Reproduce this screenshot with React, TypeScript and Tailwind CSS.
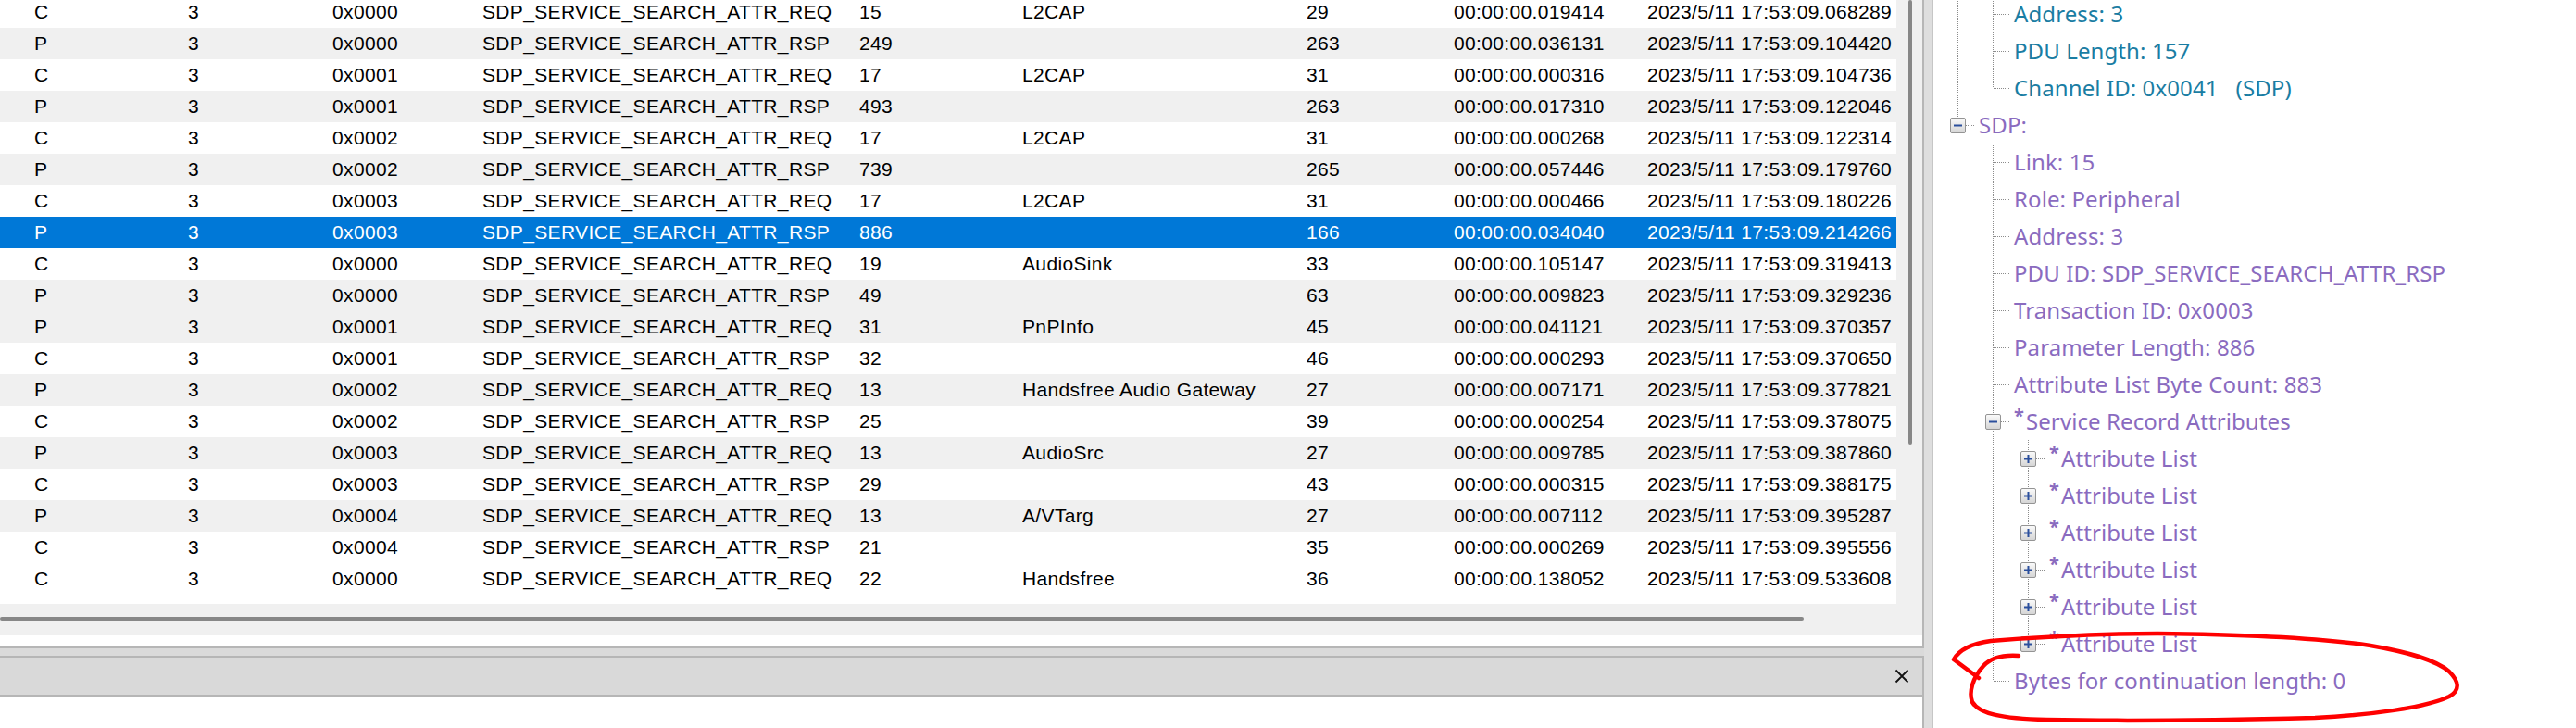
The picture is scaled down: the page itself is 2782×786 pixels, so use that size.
import React from 'react'

type Row = [string, string, string, string, string, string, string, string, string]

const rows: Row[] = [
  ['C', '3', '0x0000', 'SDP_SERVICE_SEARCH_ATTR_REQ', '15', 'L2CAP', '29', '00:00:00.019414', '2023/5/11 17:53:09.068289'],
  ['P', '3', '0x0000', 'SDP_SERVICE_SEARCH_ATTR_RSP', '249', '', '263', '00:00:00.036131', '2023/5/11 17:53:09.104420'],
  ['C', '3', '0x0001', 'SDP_SERVICE_SEARCH_ATTR_REQ', '17', 'L2CAP', '31', '00:00:00.000316', '2023/5/11 17:53:09.104736'],
  ['P', '3', '0x0001', 'SDP_SERVICE_SEARCH_ATTR_RSP', '493', '', '263', '00:00:00.017310', '2023/5/11 17:53:09.122046'],
  ['C', '3', '0x0002', 'SDP_SERVICE_SEARCH_ATTR_REQ', '17', 'L2CAP', '31', '00:00:00.000268', '2023/5/11 17:53:09.122314'],
  ['P', '3', '0x0002', 'SDP_SERVICE_SEARCH_ATTR_RSP', '739', '', '265', '00:00:00.057446', '2023/5/11 17:53:09.179760'],
  ['C', '3', '0x0003', 'SDP_SERVICE_SEARCH_ATTR_REQ', '17', 'L2CAP', '31', '00:00:00.000466', '2023/5/11 17:53:09.180226'],
  ['P', '3', '0x0003', 'SDP_SERVICE_SEARCH_ATTR_RSP', '886', '', '166', '00:00:00.034040', '2023/5/11 17:53:09.214266'],
  ['C', '3', '0x0000', 'SDP_SERVICE_SEARCH_ATTR_REQ', '19', 'AudioSink', '33', '00:00:00.105147', '2023/5/11 17:53:09.319413'],
  ['P', '3', '0x0000', 'SDP_SERVICE_SEARCH_ATTR_RSP', '49', '', '63', '00:00:00.009823', '2023/5/11 17:53:09.329236'],
  ['P', '3', '0x0001', 'SDP_SERVICE_SEARCH_ATTR_REQ', '31', 'PnPInfo', '45', '00:00:00.041121', '2023/5/11 17:53:09.370357'],
  ['C', '3', '0x0001', 'SDP_SERVICE_SEARCH_ATTR_RSP', '32', '', '46', '00:00:00.000293', '2023/5/11 17:53:09.370650'],
  ['P', '3', '0x0002', 'SDP_SERVICE_SEARCH_ATTR_REQ', '13', 'Handsfree Audio Gateway', '27', '00:00:00.007171', '2023/5/11 17:53:09.377821'],
  ['C', '3', '0x0002', 'SDP_SERVICE_SEARCH_ATTR_RSP', '25', '', '39', '00:00:00.000254', '2023/5/11 17:53:09.378075'],
  ['P', '3', '0x0003', 'SDP_SERVICE_SEARCH_ATTR_REQ', '13', 'AudioSrc', '27', '00:00:00.009785', '2023/5/11 17:53:09.387860'],
  ['C', '3', '0x0003', 'SDP_SERVICE_SEARCH_ATTR_RSP', '29', '', '43', '00:00:00.000315', '2023/5/11 17:53:09.388175'],
  ['P', '3', '0x0004', 'SDP_SERVICE_SEARCH_ATTR_REQ', '13', 'A/VTarg', '27', '00:00:00.007112', '2023/5/11 17:53:09.395287'],
  ['C', '3', '0x0004', 'SDP_SERVICE_SEARCH_ATTR_RSP', '21', '', '35', '00:00:00.000269', '2023/5/11 17:53:09.395556'],
  ['C', '3', '0x0000', 'SDP_SERVICE_SEARCH_ATTR_REQ', '22', 'Handsfree', '36', '00:00:00.138052', '2023/5/11 17:53:09.533608'],
]

const SELECTED = 7

// column widths, measured from the left edge of each text
const colClass = [
  'w-[203px] pl-[37px]',
  'w-[156px]',
  'w-[162px]',
  'w-[407px]',
  'w-[176px]',
  'w-[307px]',
  'w-[159px]',
  'w-[209px]',
  'w-[320px]',
]

type TreeItem = {
  level: number
  guides: boolean[]
  last: boolean
  text: string
  tone: 'teal' | 'purple'
  box?: '+' | '-'
  star?: boolean
}

const l2 = (text: string, last = false): TreeItem => ({ level: 1, guides: [true], last, text, tone: 'teal' })
const sdp = (text: string, last = false): TreeItem => ({ level: 1, guides: [false], last, text, tone: 'purple' })
const attr = (last = false): TreeItem => ({
  level: 2,
  guides: [false, true],
  last,
  text: 'Attribute List',
  tone: 'purple',
  box: '+',
  star: true,
})

const tree: TreeItem[] = [
  l2('Address: 3'),
  l2('PDU Length: 157'),
  l2('Channel ID: 0x0041   (SDP)', true),
  { level: 0, guides: [], last: true, text: 'SDP:', tone: 'purple', box: '-' },
  sdp('Link: 15'),
  sdp('Role: Peripheral'),
  sdp('Address: 3'),
  sdp('PDU ID: SDP_SERVICE_SEARCH_ATTR_RSP'),
  sdp('Transaction ID: 0x0003'),
  sdp('Parameter Length: 886'),
  sdp('Attribute List Byte Count: 883'),
  { level: 1, guides: [false], last: false, text: 'Service Record Attributes', tone: 'purple', box: '-', star: true },
  attr(),
  attr(),
  attr(),
  attr(),
  attr(),
  attr(true),
  sdp('Bytes for continuation length: 0', true),
]

const DOT = '#8c8c8c'

// the first visible tree row is scrolled 5px under the top edge
function guideTop(first: boolean) {
  return first ? 5 : 0
}

function GuideCell({ on, h, first }: { on: boolean; h: number; first: boolean }) {
  const o = guideTop(first)
  return (
    <svg width="38" height={h} viewBox={`0 ${o} 38 ${h}`} className="shrink-0">
      {on && <line x1="19.5" y1="0" x2="19.5" y2="40" stroke={DOT} strokeDasharray="1 1" />}
    </svg>
  )
}

function NodeCell({ last, box, h, first }: { last: boolean; box?: '+' | '-'; h: number; first: boolean }) {
  const o = guideTop(first)
  return (
    <svg width="38" height={h} viewBox={`0 ${o} 38 ${h}`} className="shrink-0">
      <defs>
        <linearGradient id="tvbox" x1="0" y1="0" x2="0" y2="1">
          <stop offset="0" stopColor="#fbfbfb" />
          <stop offset="1" stopColor="#d4d4d4" />
        </linearGradient>
      </defs>
      <line x1="19.5" y1="0" x2="19.5" y2={last ? 20 : 40} stroke={DOT} strokeDasharray="1 1" />
      <line x1="20" y1="20.5" x2="37" y2="20.5" stroke={DOT} strokeDasharray="1 1" />
      {box && (
        <g>
          <rect x="11.5" y="12.5" width="16" height="16" rx="1.5" fill="url(#tvbox)" stroke="#949494" />
          <line x1="15" y1="20.5" x2="24" y2="20.5" stroke="#2b4f9c" strokeWidth="2" />
          {box === '+' && <line x1="19.5" y1="16" x2="19.5" y2="25" stroke="#2b4f9c" strokeWidth="2" />}
        </g>
      )}
    </svg>
  )
}

function TreeRow({ item, first }: { item: TreeItem; first: boolean }) {
  const color = item.tone === 'teal' ? 'text-[#1a7da3]' : 'text-[#8a6bbf]'
  const h = first ? 35 : 40
  return (
    <div className={`flex items-start pl-[7px] ${first ? 'h-[35px]' : 'h-[40px]'}`}>
      {item.guides.map((g, i) => (
        <GuideCell key={i} on={g} h={h} first={first} />
      ))}
      <NodeCell last={item.last} box={item.box} h={h} first={first} />
      <div
        className={`ml-[4px] flex items-center whitespace-pre ${color} ${first ? 'h-[30px]' : 'h-[40px]'}`}
      >
        {item.star && <span className="mr-[2px] -mt-[12px] text-[20px] font-bold leading-none">*</span>}
        <span>{item.text}</span>
      </div>
    </div>
  )
}

function ListRow({ row, index }: { row: Row; index: number }) {
  const selected = index === SELECTED
  const bg = selected ? 'bg-[#0078d7] text-white' : row[0] === 'P' ? 'bg-[#f0f0f0] text-black' : 'bg-white text-black'
  const first = index === 0
  return (
    <div className={`flex whitespace-nowrap ${bg} ${first ? 'h-[30px]' : 'h-[34px]'}`}>
      {row.map((cell, i) => (
        <div
          key={i}
          className={`shrink-0 overflow-hidden ${first ? 'h-[30px] leading-[26px]' : 'h-[34px] leading-[34px]'} ${colClass[i]}`}
        >
          {cell}
        </div>
      ))}
    </div>
  )
}

export default function App() {
  return (
    <div className="relative flex h-[786px] w-[2782px] overflow-hidden bg-[#dadada]">
      <div className="flex w-[2078px] shrink-0 flex-col">
        <div className="flex h-[700px] flex-col border-r-2 border-b-2 border-[#b6b6b6] bg-white">
          <div className="flex h-[652px]">
            <div className="w-[2048px] overflow-hidden font-['Liberation_Sans',Arial,sans-serif] text-[21px] tracking-[0.35px]">
              {rows.map((r, i) => (
                <ListRow key={i} row={r} index={i} />
              ))}
            </div>
            <div className="flex w-[28px] bg-[#f0f0f0] pl-[13px]">
              <div className="h-[480px] w-[4px] rounded-full bg-[#878787]" />
            </div>
          </div>
          <div className="h-[34px] bg-[#f0f0f0] pt-[14px]">
            <div className="h-[4px] w-[1948px] rounded-full bg-[#878787]" />
          </div>
          <div className="h-[12px] bg-white" />
        </div>
        <div className="h-[8px]" />
        <div className="flex flex-1 flex-col border-r-2 border-[#b6b6b6]">
          <div className="flex h-[44px] items-center justify-end border-y-2 border-[#b6b6b6] bg-[#d9d9d9] pr-[14px]">
            <svg width="16" height="16" viewBox="0 0 16 16">
              <path d="M1.5 1.5 L14.5 14.5 M14.5 1.5 L1.5 14.5" stroke="#111" strokeWidth="1.8" />
            </svg>
          </div>
          <div className="flex-1 bg-white" />
        </div>
      </div>
      <div className="w-[8px] shrink-0 bg-[#dedede]" />
      <div className="flex-1 overflow-hidden border-l-2 border-[#c6c6c6] bg-white font-['Noto_Sans','Noto_Sans_CJK_SC',sans-serif] text-[24px] leading-none tracking-[0.1px]">
        {tree.map((t, i) => (
          <TreeRow key={i} item={t} first={i === 0} />
        ))}
      </div>
      <svg
        className="pointer-events-none absolute left-0 top-0"
        width="2782"
        height="786"
        viewBox="0 0 2782 786"
      >
        <path
          d="M2180,708 C2165,707 2150,710 2142,719 C2130,732 2126,748 2130,758 C2137,770 2160,776 2210,777 C2300,779 2420,777 2500,775 C2560,772 2620,764 2645,752 C2658,745 2655,735 2645,725 C2630,712 2600,704 2560,697 C2500,688 2420,685 2330,684 C2260,684 2200,688 2150,692 C2128,695 2115,703 2110,712 L2137,732"
          fill="none"
          stroke="#ff0000"
          strokeWidth="4.5"
          strokeLinecap="round"
          strokeLinejoin="round"
        />
      </svg>
    </div>
  )
}
